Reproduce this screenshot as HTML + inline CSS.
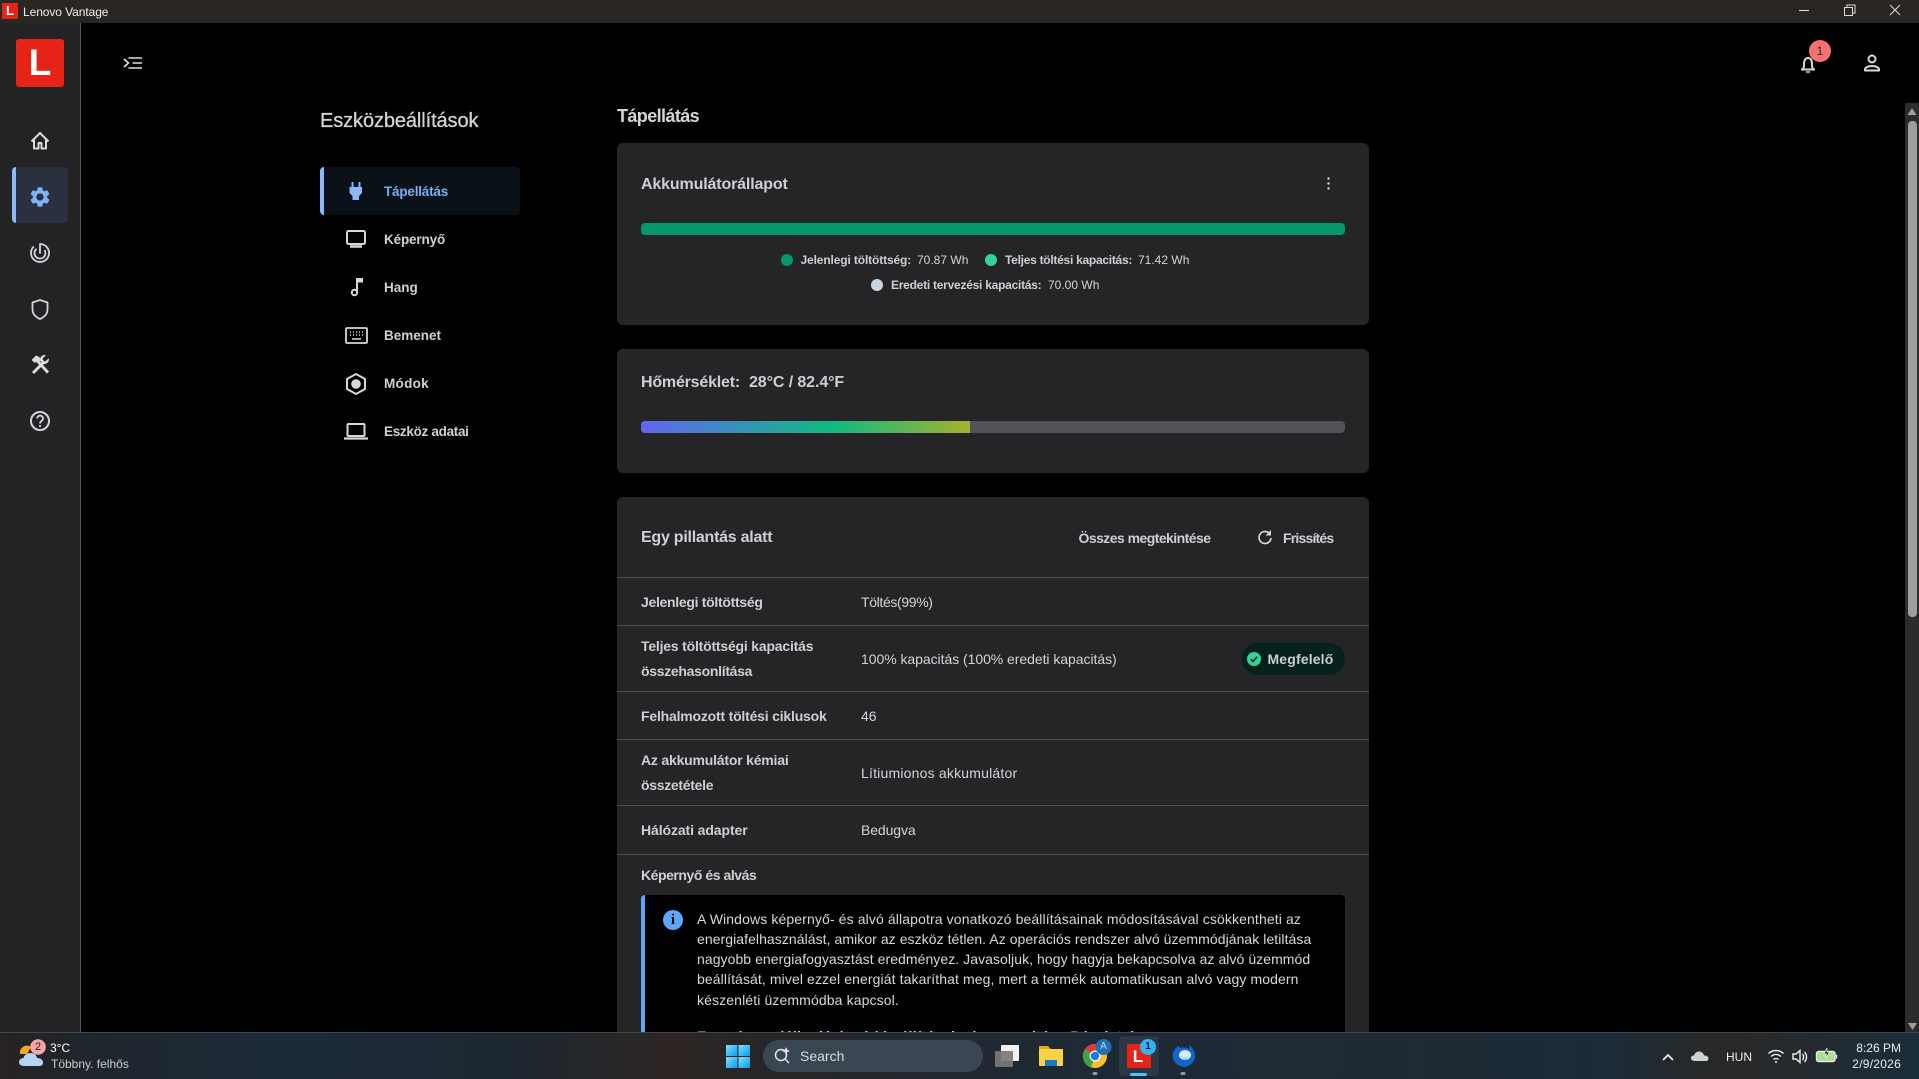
<!DOCTYPE html>
<html lang="hu"><head><meta charset="utf-8"><title>Lenovo Vantage</title>
<style>
*{box-sizing:border-box}
html,body{margin:0;padding:0;width:1919px;height:1079px;overflow:hidden;background:#000;font-family:"Liberation Sans",sans-serif;color:#d4d4d8}
.a{position:absolute}
.t{position:absolute;white-space:nowrap;line-height:20px;font-size:14px}
.b{font-weight:700;color:#cfcfd3}
.card{position:absolute;left:617px;width:752px;background:#252527;border-radius:6px}
.ln{position:absolute;left:617px;width:752px;height:1px;background:#4d4d52}
.dot{position:absolute;width:12px;height:12px;border-radius:50%}
svg{position:absolute;overflow:visible}
</style></head><body>

<!-- title bar -->
<div class="a" style="left:0;top:0;width:1919px;height:23px;background:#2a2623"></div>
<div class="a" style="left:2px;top:3px;width:16px;height:16px;background:#e52417;color:#fff;font-weight:700;font-size:13px;line-height:16px;text-align:center">L</div>
<div class="t" style="left:23px;top:2px;font-size:12px;color:#eee;letter-spacing:-.08px">Lenovo Vantage</div>
<svg style="left:0;top:0" width="1919" height="23" fill="none" stroke="#ddd" stroke-width="1">
<path d="M1799 10.5h10"/>
<path d="M1844.5 7.500h8v8h-8zM1847 7.500v-2.500h8v8h-2.500"/>
<path d="M1890 5l10 10M1900 5l-10 10"/>
</svg>

<!-- sidebar -->
<div class="a" style="left:0;top:23px;width:81px;height:1009px;background:#232325;border-right:1px solid #55555a"></div>
<div class="a" style="left:16px;top:39px;width:48px;height:48px;background:#e52417;border-radius:3px;color:#fff;font-weight:700;font-size:37px;line-height:48px;text-align:center">L</div>
<div class="a" style="left:12px;top:167px;width:56px;height:56px;background:#2a3040;border-radius:4px;border-left:4px solid #8ab8f8"></div>

<svg style="left:0;top:0" width="81" height="460" fill="none" stroke="#dcdcdc" stroke-width="2">
<!-- home -->
<path d="M31.500 141.500l8.500-8.500 8.500 8.500M34 139.500v9h4.500v-5.500h3v5.500h4.500v-9" stroke-linejoin="round"/>
<!-- gear -->
<g transform="translate(28,185)"><path stroke="none" fill="#7fb3f7" d="M19.14 12.94c.04-.3.06-.61.06-.94 0-.32-.02-.64-.07-.94l2.03-1.58c.18-.14.23-.41.12-.61l-1.92-3.32c-.12-.22-.37-.29-.59-.22l-2.39.96c-.5-.38-1.03-.7-1.62-.94l-.36-2.54c-.04-.24-.24-.41-.48-.41h-3.84c-.24 0-.43.17-.47.41l-.36 2.54c-.59.24-1.13.57-1.62.94l-2.39-.96c-.22-.08-.47 0-.59.22L2.74 8.87c-.12.21-.08.47.12.61l2.03 1.58c-.05.3-.09.63-.09.94s.02.64.07.94l-2.03 1.58c-.18.14-.23.41-.12.61l1.92 3.32c.12.22.37.29.59.22l2.39-.96c.5.38 1.03.7 1.62.94l.36 2.54c.05.24.24.41.48.41h3.84c.24 0 .44-.17.47-.41l.36-2.54c.59-.24 1.13-.56 1.62-.94l2.39.96c.22.08.47 0 .59-.22l1.92-3.32c.12-.22.07-.47-.12-.61l-2.01-1.58zM12 15.6c-1.98 0-3.6-1.62-3.6-3.6s1.62-3.6 3.6-3.6 3.6 1.62 3.6 3.6-1.62 3.6-3.6 3.6z"/></g>
<!-- radar -->
<path d="M40 244A9 9 0 1 1 33.800 246.500" stroke="#d4d4d8" stroke-width="1.800"/>
<path d="M36.500 248.800A5.500 5.500 0 1 0 44.500 250" stroke="#d4d4d8" stroke-width="1.800"/>
<path d="M40 244V253" stroke="#d4d4d8" stroke-linecap="round" stroke-width="1.800"/>
<!-- shield -->
<path d="M40 300l7.500 2.500v7c0 4.500-3.200 7.500-7.500 9.500-4.300-2-7.500-5-7.500-9.500v-7z" stroke-linejoin="round" stroke="#d4d4d8" stroke-width="1.800"/>
<!-- tools -->
<path d="M31.500 360l4.500-4.500 2.500 1 3 3-3.500 3.500-1.500-1.500-1.500 1.500z" fill="#dcdcdc" stroke="none"/>
<path d="M37 360.500L48 372.500" stroke-width="2.800"/>
<path d="M33 373L43.500 362.500" stroke-width="3"/>
<path d="M48.800 358.200l-3.500 3.300-1.900-.9-.9-1.900 3.300-3.500c-3.400-.9-6.500 2-5.600 5.800l2.800 2.800c3.800.9 6.700-2.200 5.800-5.600z" fill="#dcdcdc" stroke="none"/>
<!-- help -->
<circle cx="40" cy="421" r="9" stroke="#d4d4d8"/>
<path d="M37.200 418.500a2.900 2.900 0 1 1 4.500 2.400c-1.100.8-1.700 1.300-1.700 2.600" stroke="#d4d4d8" stroke-width="1.800"/><circle cx="40" cy="426" r="1.100" fill="#d4d4d8" stroke="none"/>
<!-- menu -->
<path d="M128.500 58h13.500M132.500 63h9.500M128.500 68h13.500M124 59l4.500 4-4.500 4" stroke="#e0e0e0" stroke-width="1.600"/>
</svg>

<!-- secondary nav -->
<div class="t" style="left:320px;top:111px;font-size:20px;line-height:20px;letter-spacing:-.1px;color:#d4d4d8;-webkit-text-stroke:.3px #d4d4d8">Eszközbeállítások</div>
<div class="a" style="left:320px;top:167px;width:200px;height:48px;background:#0b1119;border-radius:4px;border-left:4px solid #8ab8f8"></div>
<div class="t b" style="left:384px;top:182px;color:#79aef5;font-size:13.500px;letter-spacing:-.2px">Tápellátás</div>
<div class="t b" style="left:384px;top:230px;font-size:13.500px;color:#ccd0da;letter-spacing:-.15px">Képernyő</div>
<div class="t b" style="left:384px;top:278px;font-size:13.500px;color:#ccd0da">Hang</div>
<div class="t b" style="left:384px;top:326px;font-size:13.500px;color:#ccd0da">Bemenet</div>
<div class="t b" style="left:384px;top:374px;font-size:13.500px;color:#ccd0da;letter-spacing:.3px">Módok</div>
<div class="t b" style="left:384px;top:422px;font-size:13.500px;color:#ccd0da;letter-spacing:-.3px">Eszköz adatai</div>
<svg style="left:0;top:0" width="520" height="460" fill="none" stroke="#d8d8d8" stroke-width="2">
<path fill="#8ab8f8" stroke="none" d="M351.500 182h2v5h5v-5h2v5h1.500v6l-3 3v4h-6.500v-4l-3-3v-6h2z"/>
<rect x="347" y="231" width="18" height="13" rx="1.500"/><path d="M350 246.500h12" stroke-width="2.500"/>
<path d="M357 279v13.500" /><path d="M357 279h5v2.500h-5z" fill="#d8d8d8"/><circle cx="354.500" cy="292.500" r="2.700"/>
<rect x="346" y="328" width="21" height="15" rx="1" stroke-width="1.800"/>
<path d="M350 332h1M353 332h1M356 332h1M359 332h1M362 332h1M350 335h1M353 335h1M356 335h1M359 335h1M362 335h1M352 339h9" stroke-width="1.500"/>
<path d="M356 374l9 5v10l-9 5-9-5v-10z" stroke-linejoin="round"/><circle cx="356" cy="384" r="4.800" fill="#d8d8d8" stroke="none"/>
<rect x="347.500" y="424" width="17" height="12" rx="1"/><path d="M344 438.500h24" stroke-width="2.200"/>
</svg>

<!-- top right -->
<svg style="left:0;top:0" width="1919" height="120" fill="none" stroke="#d8d8d8" stroke-width="2">
<path d="M1801 69.500h14M1802.500 69.500c1.500-1.500 1.500-3 1.500-6 0-3 1.500-5.500 4-5.500s4 2.500 4 5.500c0 3 0 4.500 1.500 6" stroke-linejoin="round"/>
<path d="M1806 72h4" stroke-width="1.500"/>
<circle cx="1872" cy="59" r="3.500"/><path d="M1865 70.500v-1c0-2 3-3.500 7-3.500s7 1.500 7 3.500v1z" stroke-linejoin="round"/>
</svg>
<div class="a" style="left:1809px;top:40px;width:22px;height:22px;border-radius:50%;background:#f87171;color:#222;font-size:12px;line-height:22px;text-align:center">1</div>

<!-- scrollbar -->
<div class="a" style="left:1905px;top:103px;width:14px;height:929px;background:#2c2c2c"></div>
<svg style="left:0;top:0" width="1919" height="1032">
<path d="M1912 108l4.500 7h-9z" fill="#9e9e9e"/>
<rect x="1908" y="121" width="9" height="496" rx="4" fill="#9e9e9e"/>
<path d="M1912.500 1030l-4.500-7h9z" fill="#9e9e9e"/>
</svg>

<!-- content -->
<div class="t b" style="left:617px;top:106px;font-size:18px;color:#d4d4d8;letter-spacing:-.6px">Tápellátás</div>

<div class="card" style="top:143px;height:182px"></div>
<div class="t b" style="left:641px;top:175px;font-size:16px;letter-spacing:-.15px">Akkumulátorállapot</div>
<svg style="left:1324px;top:175px" width="10" height="20" fill="#d4d4d8"><circle cx="4.500" cy="3.500" r="1.200"/><circle cx="4.500" cy="8.500" r="1.200"/><circle cx="4.500" cy="13.500" r="1.200"/></svg>
<div class="a" style="left:641px;top:223px;width:704px;height:12px;border-radius:4px;background:#059669"></div>
<div class="dot" style="left:781px;top:254px;background:#059669"></div>
<div class="t b" style="left:800.500px;top:250px;font-size:12px;letter-spacing:-.13px">Jelenlegi töltöttség:</div>
<div class="t" style="left:917px;top:250px;font-size:12px">70.87 Wh</div>
<div class="dot" style="left:985px;top:254px;background:#34d399"></div>
<div class="t b" style="left:1005px;top:250px;font-size:12px;letter-spacing:-.27px">Teljes töltési kapacitás:</div>
<div class="t" style="left:1138px;top:250px;font-size:12px">71.42 Wh</div>
<div class="dot" style="left:871px;top:279px;background:#cbd5e1"></div>
<div class="t b" style="left:891px;top:275px;font-size:12px;letter-spacing:-.25px">Eredeti tervezési kapacitás:</div>
<div class="t" style="left:1048px;top:275px;font-size:12px">70.00 Wh</div>

<div class="card" style="top:349px;height:124px"></div>
<div class="t b" style="left:641px;top:373px;font-size:16px;letter-spacing:-.2px">Hőmérséklet:</div>
<div class="t b" style="left:749px;top:373px;font-size:16px;letter-spacing:-.1px">28°C / 82.4°F</div>
<div class="a" style="left:641px;top:421px;width:704px;height:12px;border-radius:4px;background:#52525b;overflow:hidden"><div style="width:328.500px;height:12px;background:linear-gradient(90deg,#6366f1 0,#10b981 58%,#a3b32f 100%)"></div></div>

<div class="card" style="top:497px;height:560px"></div>
<div class="t b" style="left:641px;top:528px;font-size:16px;letter-spacing:-.25px">Egy pillantás alatt</div>
<div class="t b" style="left:1078.500px;top:528px;letter-spacing:-.55px">Összes megtekintése</div>
<svg style="left:1257px;top:529px" width="16" height="16"><path d="M12.200 4.200A6 6 0 1 0 14 9" fill="none" stroke="#d4d4d8" stroke-width="1.700"/><path d="M14 1v5.500H8.500z" fill="#d4d4d8"/></svg>
<div class="t b" style="left:1283px;top:528px;letter-spacing:-.8px">Frissítés</div>

<div class="ln" style="top:577px"></div><div class="ln" style="top:625px"></div><div class="ln" style="top:691px"></div><div class="ln" style="top:739px"></div><div class="ln" style="top:805px"></div><div class="ln" style="top:854px"></div>

<div class="t b" style="left:641px;top:592px;letter-spacing:-.3px">Jelenlegi töltöttség</div>
<div class="t" style="left:861px;top:592px;letter-spacing:-.35px">Töltés(99%)</div>
<div class="t b" style="left:641px;top:636px;letter-spacing:-.2px">Teljes töltöttségi kapacitás</div>
<div class="t b" style="left:641px;top:661px;letter-spacing:-.3px">összehasonlítása</div>
<div class="t" style="left:861px;top:649px;letter-spacing:-.05px">100% kapacitás (100% eredeti kapacitás)</div>
<div class="a" style="left:1242px;top:643px;width:103px;height:32px;border-radius:16px;background:#04211b"></div>
<svg style="left:1247px;top:652px" width="14" height="14"><circle cx="7" cy="7" r="7" fill="#34d399"/><path d="M3.800 7.200l2.200 2.300 4.200-4.800" fill="none" stroke="#04211b" stroke-width="1.500"/></svg>
<div class="t b" style="left:1267.500px;top:649px;letter-spacing:.15px">Megfelelő</div>
<div class="t b" style="left:641px;top:706px;letter-spacing:-.2px">Felhalmozott töltési ciklusok</div>
<div class="t" style="left:861px;top:706px">46</div>
<div class="t b" style="left:641px;top:750px;letter-spacing:-.2px">Az akkumulátor kémiai</div>
<div class="t b" style="left:641px;top:775px;letter-spacing:-.3px">összetétele</div>
<div class="t" style="left:861px;top:763px;letter-spacing:.2px">Lítiumionos akkumulátor</div>
<div class="t b" style="left:641px;top:820px;letter-spacing:-.1px">Hálózati adapter</div>
<div class="t" style="left:861px;top:820px;letter-spacing:-.1px">Bedugva</div>
<div class="t b" style="left:641px;top:865px;letter-spacing:-.45px">Képernyő és alvás</div>

<div class="a" style="left:641px;top:895px;width:704px;height:180px;background:#000;border-left:4px solid #60a5fa;border-radius:4px 4px 0 0"></div>
<div class="a" style="left:663px;top:910px;width:20px;height:20px;border-radius:50%;background:#60a5fa;color:#0b1119;font:700 15px/20px 'Liberation Serif',serif;text-align:center">i</div>
<div class="t" style="left:697px;top:909px;color:#d8d8dc;letter-spacing:.12px">A Windows képernyő- és alvó állapotra vonatkozó beállításainak módosításával csökkentheti az</div>
<div class="t" style="left:697px;top:929px;color:#d8d8dc;letter-spacing:.06px">energiafelhasználást, amikor az eszköz tétlen. Az operációs rendszer alvó üzemmódjának letiltása</div>
<div class="t" style="left:697px;top:949px;color:#d8d8dc;letter-spacing:.06px">nagyobb energiafogyasztást eredményez. Javasoljuk, hogy hagyja bekapcsolva az alvó üzemmód</div>
<div class="t" style="left:697px;top:969px;color:#d8d8dc;letter-spacing:.1px">beállítását, mivel ezzel energiát takaríthat meg, mert a termék automatikusan alvó vagy modern</div>
<div class="t" style="left:697px;top:990px;color:#d8d8dc;letter-spacing:.12px">készenléti üzemmódba kapcsol.</div>
<div class="t b" style="left:697px;top:1026px;color:#d8d8dc;letter-spacing:.4px">Energiagazdálkodási mód beállításainak megnyitása  Részletek</div>

<!-- taskbar -->
<div class="a" style="left:0;top:1032px;width:1919px;height:47px;border-top:1px solid #3f4650;background:linear-gradient(90deg,#262321 0,#1f252b 4%,#1b2a37 14%,#1c2731 26%,#2c2522 35%,#242628 42%,#1d2a36 58%,#1e2a33 72%,#1b2b37 84%,#2a2826 90%,#1a2d3b 100%)"></div>

<!-- weather -->
<svg style="left:0;top:1032px" width="60" height="47">
<path d="M20 22a7 7 0 0 1 11-7l-4 7z" fill="#f5a623"/>
<path d="M24 34c-3.500 0-5-2-5-4s2-4 4.500-4c1-3.500 4-5 7-5 3.500 0 6 2 6.500 5 3 0 6 1.500 6 4.500s-2 3.500-4 3.500z" fill="#b8d4f4"/>
<circle cx="38" cy="15" r="7.800" fill="#f9a3ab"/>
</svg>
<div class="t" style="left:34px;top:1037px;width:8px;text-align:center;font-size:11px;color:#222;line-height:20px;left:34px">2</div>
<div class="t" style="left:50px;top:1038px;font-size:12px;color:#fff">3°C</div>
<div class="t" style="left:51px;top:1054px;font-size:12px;color:#ccc">Többny. felhős</div>

<!-- center icons -->
<svg style="left:0;top:0" width="1300" height="1079">
<defs><linearGradient id="w" x1="0" y1="0" x2="1" y2="1"><stop offset="0" stop-color="#7fe0ff"/><stop offset="1" stop-color="#0a9be8"/></linearGradient></defs>
<g fill="url(#w)"><rect x="726" y="1045" width="11.500" height="11"/><rect x="738.500" y="1045" width="11.500" height="11"/><rect x="726" y="1057" width="11.500" height="11"/><rect x="738.500" y="1057" width="11.500" height="11"/></g>
<rect x="763" y="1040" width="220" height="32" rx="16" fill="#3a4652"/>
<circle cx="781" cy="1055" r="5.500" fill="none" stroke="#dfe6f5" stroke-width="1.500"/><path d="M785 1059l4 4" stroke="#dfe6f5" stroke-width="1.500"/><path d="M786 1047l1.200 2.800 2.800 1.200-2.800 1.200-1.200 2.800-1.200-2.800-2.800-1.200 2.800-1.200z" fill="#f0d8ff"/>
<rect x="1001" y="1045" width="18" height="16" rx="1" fill="#f2f2f2"/>
<rect x="995" y="1051" width="18" height="16" rx="1" fill="#7a7a7a" fill-opacity=".92"/>
<path d="M1039 1046h9l3 3h12v4h-24z" fill="#e0a81c"/><rect x="1039" y="1049" width="24" height="17" rx="1" fill="#fbd14b"/><rect x="1045" y="1060" width="12" height="6" fill="#1a78c9"/>
<circle cx="1095" cy="1056" r="12" fill="#fbc02d"/>
<path d="M1095 1056L1085 1049a12 12 0 0 1 20.500 1.500z" fill="#e53935"/>
<path d="M1095 1056L1085 1049a12 12 0 0 0 6 18.500z" fill="#43a047"/>
<circle cx="1095" cy="1056" r="5.500" fill="#fff"/><circle cx="1095" cy="1056" r="4.300" fill="#1e78e8"/>
<circle cx="1103.500" cy="1047" r="8" fill="#1f6fb5"/>
<rect x="1119" y="1036" width="40" height="40" rx="4" fill="#ffffff" fill-opacity=".07"/>
<rect x="1127" y="1044" width="24" height="24" fill="#e52417"/>
<circle cx="1148" cy="1047" r="8" fill="#35b1ef"/>
<rect x="1130" y="1073" width="17" height="3" rx="1.500" fill="#4cc2ff"/>
<path d="M1178 1046c-5 4-7 10-4 15 3 5 9 7 14 5 5-2 8-7 7-12-1-4-3-7-6-9 1 2 1 3 0 4-3-2-7-2-9-1 0-1-1-2-2-2z" fill="#1366c9"/>
<ellipse cx="1185" cy="1055" rx="6" ry="5" fill="#d6ecff"/><path d="M1181 1056l4 2 4-2-4 4z" fill="#8abff0"/>
<rect x="1092.500" y="1072" width="5" height="3" rx="1.500" fill="#999"/>
<rect x="1180.500" y="1072" width="5" height="3" rx="1.500" fill="#999"/>
</svg>
<div class="t" style="left:800px;top:1046px;font-size:14px;color:#d8dde3">Search</div>
<div class="t" style="left:1098px;top:1037px;width:11px;text-align:center;font-size:10px;color:#bcd6ee">A</div>
<div class="t b" style="left:1143px;top:1037px;width:10px;text-align:center;font-size:10px;color:#06283f">1</div>
<div class="a" style="left:1127px;top:1044px;width:24px;height:24px;color:#fff;font-weight:700;font-size:17px;line-height:26px;text-align:center;padding-right:2px">L</div>

<!-- tray -->
<svg style="left:0;top:0" width="1919" height="1079" fill="none" stroke="#eee" stroke-width="1.400">
<path d="M1663 1060l5-5 5 5" stroke-width="1.800"/>
<path d="M1695 1061c-3 0-4-1.500-4-3s1.500-2.500 3-2.500c1-3 3-4 5-4 2.500 0 4.500 1.500 5 4 2.500 0 4.500 1 4.500 3s-1.500 2.500-3.500 2.500z" fill="#cfd2d4" stroke="none"/>
<path d="M1768.500 1053.500c4.500-4 10.500-4 15 0M1771 1056.500c3-2.700 7-2.700 10 0M1773.500 1059.500c1.500-1.300 3.500-1.300 5 0"/><circle cx="1776" cy="1062" r="1" fill="#eee" stroke="none"/>
<path d="M1793 1054h3l4-3.500v12l-4-3.500h-3zM1802.500 1054c1.500 1.700 1.500 4.300 0 6M1804.500 1052c2.700 3 2.700 7 0 10"/>
<rect x="1816.500" y="1051.500" width="18.500" height="10" rx="2" fill="#a7e08e" stroke="#e8e8e8"/><path d="M1836.500 1054.500v4"/>
<path d="M1827 1048l-3 6h2.500l-1 4.500 4-6.500h-2.500z" fill="#15202a" stroke="#eee" stroke-width=".7"/>
</svg>
<div class="t" style="left:1726px;top:1047px;font-size:12px;color:#eee">HUN</div>
<div class="t" style="left:1839px;top:1038px;width:62px;text-align:right;font-size:12px;color:#eee">8:26 PM</div>
<div class="t" style="left:1839px;top:1054px;width:62px;text-align:right;font-size:12px;color:#eee;letter-spacing:.25px">2/9/2026</div>
</body></html>
